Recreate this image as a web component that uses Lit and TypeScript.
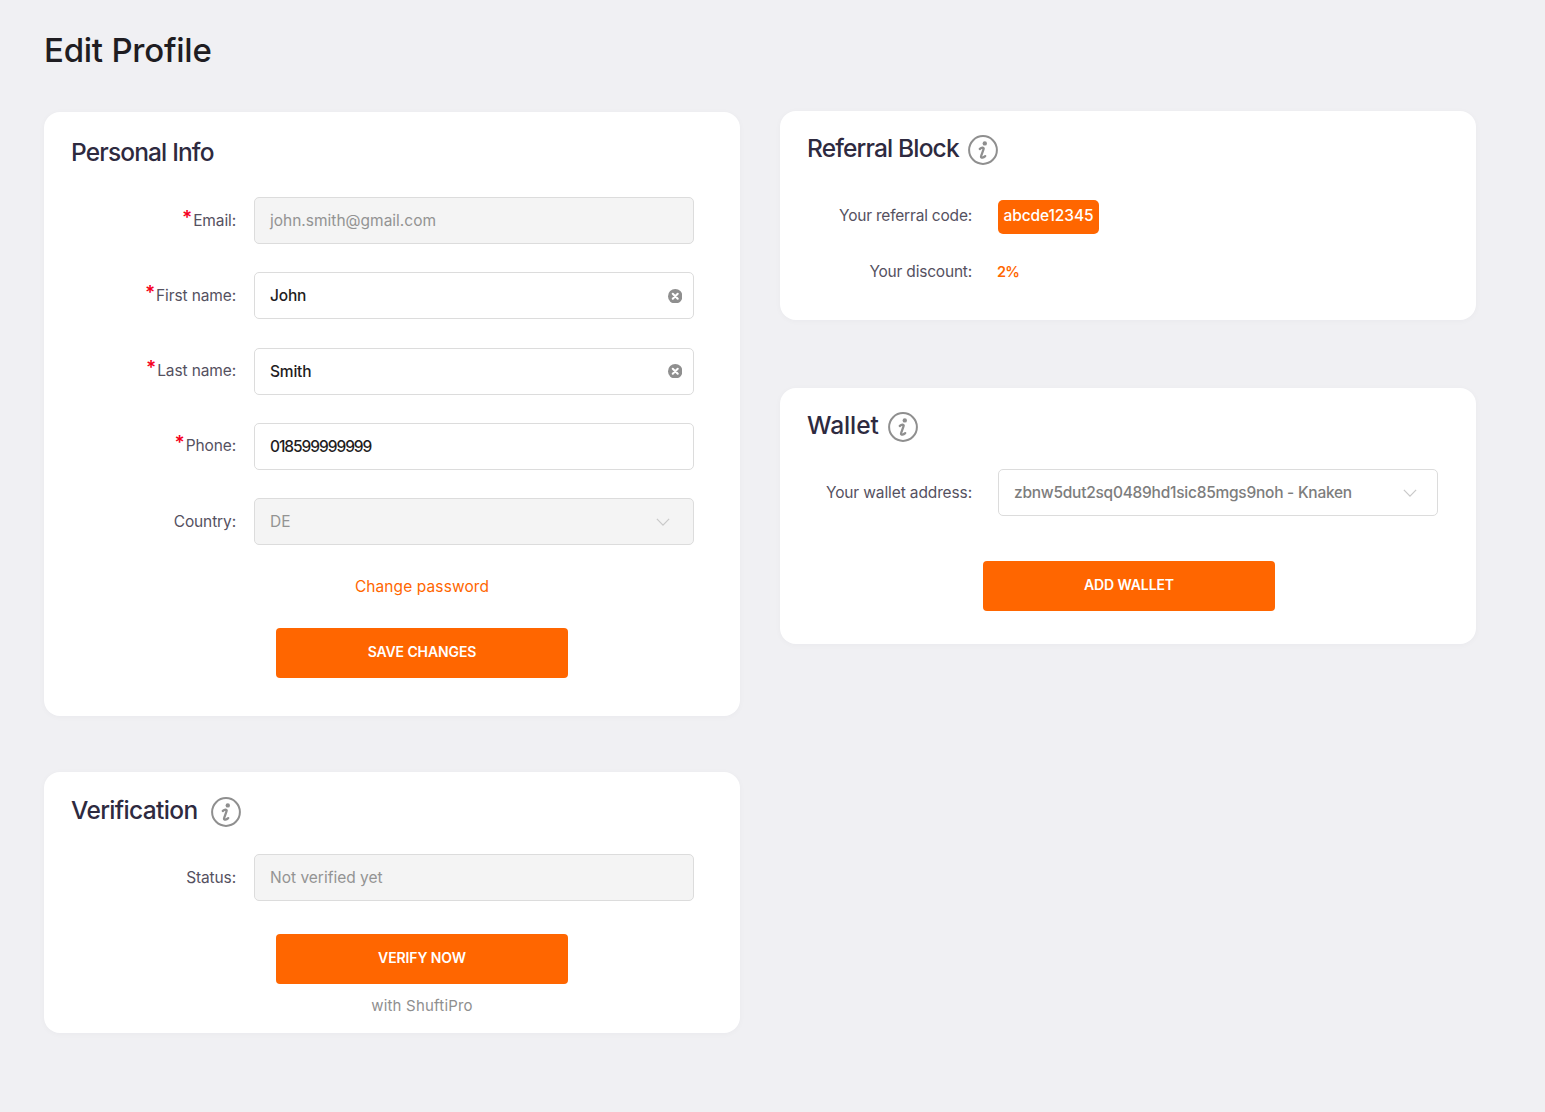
import { LitElement, html, css, nothing } from "lit";
import { customElement } from "lit/decorators.js";

const info = html`<svg class="info" viewBox="0 0 30 30" fill="none" aria-hidden="true">
  <circle cx="15" cy="15" r="13.9" stroke="#8f8f8f" stroke-width="2"></circle>
  <circle cx="16.8" cy="8.4" r="2.2" fill="#8f8f8f"></circle>
  <path d="M11.8 14c1.9-1.6 3.9-1.8 3.9-.4 0 1.2-2.7 7-2.7 8.2 0 1.5 2.4 1 4.2-.7" stroke="#8f8f8f" stroke-width="2.3" stroke-linecap="round"></path>
</svg>`;

const clear = html`<svg class="clear" viewBox="0 0 14 14" aria-hidden="true">
  <circle cx="7" cy="7" r="7" fill="#8f8f8f"></circle>
  <path d="M4.6 4.6l4.8 4.8M9.4 4.6l-4.8 4.8" stroke="#fff" stroke-width="2" stroke-linecap="round"></path>
</svg>`;

const chevron = html`<svg class="chev" viewBox="0 0 16 9" fill="none" aria-hidden="true">
  <path d="M1 1l7 7 7-7" stroke="#c9c9c9" stroke-width="1.4"></path>
</svg>`;

@customElement("app-root")
export class AppRoot extends LitElement {
  static styles = css`
    :host {
      display: block;
      min-height: 1112px;
      background: #f0f0f3;
      font-family: "Inter", "Liberation Sans", sans-serif;
      color: #2e2a3f;
    }
    .page { padding: 30px 0 0 44px; box-sizing: border-box; min-height: 1112px; }
    h1 {
      margin: 0 0 41px 0;
      font-size: 33px;
      line-height: 40px;
      font-weight: 500;
      letter-spacing: -0.25px;
      color: #1f1d22;
    }
    .columns { display: grid; grid-template-columns: 696px 696px; column-gap: 40px; align-items: start; }
    .col { display: flex; flex-direction: column; }
    .left { gap: 56px; margin-top: 1px; }
    .right { gap: 68px; }
    .card {
      background: #fff;
      border-radius: 16px;
      padding: 0 27px;
      box-shadow: 0 1px 6px rgba(40, 40, 60, 0.03);
    }
    .title {
      display: flex;
      align-items: center;
      height: 34px;
      margin: 0;
      font-size: 24.5px;
      font-weight: 500;
      letter-spacing: -0.85px;
      color: #2e2a3f;
    }
    .info { width: 30px; height: 30px; flex: none; margin-top: 4px; }
    .personal { padding-top: 23px; height: 604px; box-sizing: border-box; }
    .personal .title { margin-bottom: 28px; }
    .verification { padding-top: 21px; height: 261px; box-sizing: border-box; }
    .verification .title { gap: 14px; margin-bottom: 27px; letter-spacing: -0.65px; }
    .referral { padding-top: 20px; height: 209px; box-sizing: border-box; }
    .referral .title { gap: 9px; margin-bottom: 35px; }
    .wallet { padding-top: 20px; height: 256px; box-sizing: border-box; }
    .wallet .title { gap: 9px; margin-bottom: 27px; letter-spacing: -0.1px; }
    .rows { display: flex; flex-direction: column; gap: 28.25px; }
    .row { display: flex; align-items: center; }
    .label {
      width: 165px;
      margin-right: 18px;
      text-align: right;
      font-size: 15.5px;
      letter-spacing: -0.12px;
      color: #55515f;
      white-space: nowrap;
      flex: none;
      line-height: 22px;
    }
    .req { color: #f5001d; font-size: 19px; font-weight: 600; line-height: 0; position: relative; top: -2px; margin-right: 1px; }
    .input {
      width: 440px;
      height: 47px;
      box-sizing: border-box;
      flex: none;
      display: flex;
      align-items: center;
      justify-content: space-between;
      padding: 0 11px 0 15px;
      border: 1px solid #dcdcdc;
      border-radius: 5px;
      background: #fff;
      font-size: 15.5px;
      font-weight: 500;
      letter-spacing: -0.2px;
      color: #1f1d22;
      white-space: nowrap;
    }
    .input.off { background: #f4f4f4; color: #939393; font-weight: 400; letter-spacing: 0; }
    .input.num { letter-spacing: -1.05px; }
    .clear { width: 14.5px; height: 14.5px; flex: none; }
    .chev { width: 14px; height: 8px; flex: none; margin-right: 12px; }
    .actions { margin-left: 78px; width: 546px; display: flex; flex-direction: column; align-items: center; }
    .link { margin-top: 31px; line-height: 22px; font-size: 15.5px; letter-spacing: 0.1px; color: #ff6600; }
    .btn {
      width: 292px;
      height: 50px;
      box-sizing: border-box;
      padding-bottom: 3px;
      display: flex;
      align-items: center;
      justify-content: center;
      background: #ff6600;
      border-radius: 4px;
      color: #fff;
      font-size: 14px;
      font-weight: 600;
      letter-spacing: -0.1px;
    }
    .link + .btn { margin-top: 30px; }
    .verification .actions { margin-top: 33px; }
    .note { margin-top: 11px; font-size: 15px; line-height: 22px; letter-spacing: 0.2px; color: #8f8f8f; }
    .referral .label, .wallet .label { width: 165px; margin-right: 26px; }
    .referral .label { letter-spacing: -0.2px; }
    .referral .first { padding-bottom: 3px; }
    .badge {
      height: 34px;
      box-sizing: border-box;
      padding: 0 5.5px 3px;
      display: flex;
      align-items: center;
      background: #ff6600;
      border-radius: 5px;
      color: #fff;
      font-size: 15.5px;
      font-weight: 500;
      letter-spacing: -0.1px;
    }
    .ref-rows { display: flex; flex-direction: column; gap: 26px; }
    .pct { color: #ff6600; font-size: 14.5px; font-weight: 600; line-height: 24px; letter-spacing: -0.8px; margin-left: -1px; }
    .wallet .input { font-weight: 500; color: #7d7d7d; background: #fff; letter-spacing: -0.25px; }
    .wallet .chev { margin-right: 9px; }
    .wallet .actions { margin: 45px 0 0; width: 644px; }
  `;

  private field(label: string, value: string, opts: { req?: boolean; off?: boolean; clear?: boolean; select?: boolean; num?: boolean } = {}) {
    return html`<div class="row">
      <div class="label">${opts.req ? html`<span class="req">*</span>` : nothing}${label}</div>
      <div class="input ${opts.off ? "off" : ""} ${opts.num ? "num" : ""}">
        <span>${value}</span>
        ${opts.clear ? clear : nothing}
        ${opts.select ? chevron : nothing}
      </div>
    </div>`;
  }

  render() {
    return html`<div class="page">
      <h1>Edit Profile</h1>
      <div class="columns">
        <div class="col left">
          <section class="card personal">
            <h2 class="title">Personal Info</h2>
            <div class="rows">
              ${this.field("Email:", "john.smith@gmail.com", { req: true, off: true })}
              ${this.field("First name:", "John", { req: true, clear: true })}
              ${this.field("Last name:", "Smith", { req: true, clear: true })}
              ${this.field("Phone:", "018599999999", { req: true, num: true })}
              ${this.field("Country:", "DE", { off: true, select: true })}
            </div>
            <div class="actions">
              <div class="link">Change password</div>
              <div class="btn">SAVE CHANGES</div>
            </div>
          </section>
          <section class="card verification">
            <h2 class="title">Verification ${info}</h2>
            ${this.field("Status:", "Not verified yet", { off: true })}
            <div class="actions">
              <div class="btn">VERIFY NOW</div>
              <div class="note">with ShuftiPro</div>
            </div>
          </section>
        </div>
        <div class="col right">
          <section class="card referral">
            <h2 class="title">Referral Block ${info}</h2>
            <div class="ref-rows">
              <div class="row"><div class="label first">Your referral code:</div><div class="badge">abcde12345</div></div>
              <div class="row"><div class="label">Your discount:</div><div class="pct">2%</div></div>
            </div>
          </section>
          <section class="card wallet">
            <h2 class="title">Wallet ${info}</h2>
            ${this.field("Your wallet address:", "zbnw5dut2sq0489hd1sic85mgs9noh - Knaken", { select: true })}
            <div class="actions"><div class="btn">ADD WALLET</div></div>
          </section>
        </div>
      </div>
    </div>`;
  }
}
